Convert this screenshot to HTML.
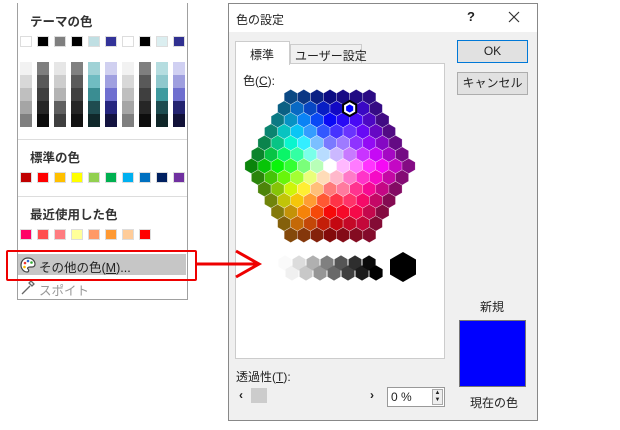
<!DOCTYPE html>
<html><head><meta charset="utf-8"><style>
*{margin:0;padding:0;box-sizing:border-box}
body{width:620px;height:430px;background:#fff;position:relative;overflow:hidden;font-family:"Liberation Sans","Noto Sans CJK JP",sans-serif;font-size:12px;color:#222}
.a{position:absolute}
.sw{position:absolute;width:12px;height:11px;border:1px solid #ddd}
.lbl{font-weight:bold;font-size:12.5px;color:#333}
</style></head><body>
<!-- left menu -->
<div class="a" style="left:17px;top:3px;width:171px;height:297px;border:1px solid #a0a0a0;border-top:none;background:#fff"></div>
<div class="a lbl" style="left:30px;top:11px">テーマの色</div>
<div id="theme"></div>
<div class="a" style="left:18px;top:139px;width:169px;height:1px;background:#ddd"></div>
<div class="a lbl" style="left:30px;top:147px">標準の色</div>
<div class="a" style="left:18px;top:196px;width:169px;height:1px;background:#ddd"></div>
<div class="a lbl" style="left:30px;top:204px">最近使用した色</div>
<div class="a" style="left:18px;top:254px;width:168px;height:21px;background:#c6c6c6"></div>
<svg class="a" style="left:19px;top:256px" width="18" height="18" viewBox="0 0 18 18"><path d="M9 2C4 2 2 6 2 9c0 4 3 7 6 7 2 0 2-2 1-3s0-2 2-2h2c2 0 3-1 3-3 0-3-3-6-7-6z" fill="#fff" stroke="#444" stroke-width="1.2"/><circle cx="6" cy="7" r="1.3" fill="#e33"/><circle cx="9" cy="5" r="1.3" fill="#36c"/><circle cx="12.5" cy="6.5" r="1.3" fill="#3a3"/><circle cx="5.5" cy="11" r="1.3" fill="#fb0"/></svg>
<div class="a" style="left:39px;top:257px;font-size:12.5px;color:#222">その他の色(<u>M</u>)...</div>
<svg class="a" style="left:20px;top:279px" width="16" height="16"><path d="M2 15l8-8M9 4l3 3M11 2l3 3-2 2-3-3z" stroke="#666" stroke-width="1.3" fill="none"/></svg>
<div class="a" style="left:39px;top:280px;color:#999;font-size:12.5px">スポイト</div>
<!-- dialog -->
<div class="a" style="left:228px;top:3px;width:310px;height:418px;background:#f0f0f0;border:1px solid #888"></div>
<div class="a" style="left:229px;top:4px;width:308px;height:28px;background:#fff"></div>
<div class="a" style="left:236px;top:11px;font-size:12px">色の設定</div>
<div class="a" style="left:467px;top:9px;font-size:13px;font-weight:bold">?</div>
<svg class="a" style="left:508px;top:11px" width="12" height="12"><path d="M1 1L11 11M11 1L1 11" stroke="#333" stroke-width="1.2"/></svg>
<div class="a" style="left:235px;top:63px;width:210px;height:296px;background:#fff;border:1px solid #ccc"></div>
<div class="a" style="left:235px;top:41px;width:55px;height:24px;background:#fff;border:1px solid #ccc;border-bottom:none;font-size:12px;padding:4px 0 0 14px">標準</div>
<div class="a" style="left:290px;top:44px;width:72px;height:19px;background:#f0f0f0;border:1px solid #ccc;border-bottom:none;font-size:12px;padding:2px 0 0 4px;white-space:nowrap">ユーザー設定</div>
<div class="a" style="left:243px;top:72px;font-size:12px">色(<u>C</u>):</div>
<svg id="hex" class="a" style="left:235px;top:85px" width="200" height="200"></svg>
<div class="a" style="left:457px;top:40px;width:71px;height:23px;background:#e1e1e1;border:1px solid #0078d7;text-align:center;line-height:21px;font-size:12px">OK</div>
<div class="a" style="left:457px;top:72px;width:71px;height:23px;background:#e1e1e1;border:1px solid #adadad;text-align:center;line-height:21px;font-size:12px">キャンセル</div>
<div class="a" style="left:480px;top:298px;font-size:12px">新規</div>
<div class="a" style="left:459px;top:320px;width:67px;height:67px;background:#00f;border:1px solid #777"></div>
<div class="a" style="left:470px;top:394px;font-size:12px">現在の色</div>
<div class="a" style="left:236px;top:368px;font-size:12px">透過性(<u>T</u>):</div>
<div class="a" style="left:236px;top:387px;width:146px;height:18px;background:#f0f0f0"></div>
<div class="a" style="left:239px;top:388px;font-size:12px;font-weight:bold">‹</div>
<div class="a" style="left:251px;top:388px;width:16px;height:15px;background:#ccc"></div>
<div class="a" style="left:370px;top:388px;font-size:12px;font-weight:bold">›</div>
<div class="a" style="left:387px;top:387px;width:58px;height:20px;background:#fff;border:1px solid #999;font-size:12px;padding:2px 0 0 3px">0 %</div>
<div class="a" style="left:432px;top:389px;width:11px;height:16px;border:1px solid #aaa;background:#eee;font-size:6px;line-height:7px;text-align:center">▲<br>▼</div>
<!-- red annotations on top -->
<div class="a" style="left:6px;top:250px;width:191px;height:31px;border:2px solid #e00;border-radius:2px;z-index:5"></div>
<svg class="a" style="left:196px;top:248px;z-index:5" width="70" height="34"><path d="M0 16H62M40 3L63 16 40 29" stroke="#e00" stroke-width="3" fill="none"/></svg>
<script>
var th=['#fff','#000','#7f7f7f','#000','#c0dfe3','#333399','#fff','#000','#dbeef0','#303090'];
var sh=[['#f2f2f2','#d8d8d8','#bfbfbf','#a5a5a5','#7f7f7f'],['#7f7f7f','#595959','#3f3f3f','#262626','#0d0d0d'],['#e6e6e6','#cdcdcd','#b3b3b3','#5f5f5f','#3f3f3f'],['#808080','#5a5a5a','#404040','#262626','#121212'],['#a0d2d6','#70bcc2','#3a8d92','#1f4c50','#10282a'],['#d0d0f0','#a0a0e0','#6f6fd0','#262680','#131340'],['#f2f2f2','#d8d8d8','#bfbfbf','#a5a5a5','#7f7f7f'],['#7f7f7f','#595959','#3f3f3f','#262626','#0d0d0d'],['#b5dde0','#8fc8cd','#3f9a9f','#1d4c50','#0f2628'],['#d0d0f2','#9f9fdf','#6f6fcf','#232370','#111138']];
var st=['#c00000','#ff0000','#ffc000','#ffff00','#92d050','#00b050','#00b0f0','#0070c0','#002060','#7030a0'];
var rc=['#ff0066','#ff5050','#ff7c80','#ffff99','#ff9966','#ff9933','#ffcc99','#ff0000'];
var h='';
for(var i=0;i<10;i++){var x=20+i*17;h+='<div class="sw" style="left:'+x+'px;top:36px;background:'+th[i]+'"></div>';
for(var j=0;j<5;j++)h+='<div class="a" style="left:'+x+'px;top:'+(62+j*13)+'px;width:12px;height:13px;background:'+sh[i][j]+'"></div>';
h+='<div class="sw" style="left:'+x+'px;top:172px;background:'+st[i]+'"></div>';}
for(var i=0;i<8;i++)h+='<div class="sw" style="left:'+(20+i*17)+'px;top:229px;background:'+rc[i]+'"></div>';
document.getElementById('theme').innerHTML=h;
function hsl(H,S,L){return 'hsl('+H+','+S+'%,'+L+'%)';}
var W=13.1,R=11.5,cx=95,cy=81,s='';
function hex(x,y,w,c,extra){var a=w/2,b=w/Math.sqrt(3);return '<polygon points="'+[[x,y-b],[x+a,y-b/2],[x+a,y+b/2],[x,y+b],[x-a,y+b/2],[x-a,y-b/2]].map(function(p){return p[0].toFixed(1)+','+p[1].toFixed(1)}).join(' ')+'" fill="'+c+'" '+(extra||'')+'/>';}
var Ls=[100,86,74,60,50,40,28];
for(var r=0;r<13;r++){var n=13-Math.abs(r-6);var y=12+r*R;
for(var k=0;k<n;k++){var col=k-(n-1)/2;var x=cx+col*W;
var q=Math.abs(r-6),dc=Math.abs(2*col);var ring=q+Math.max(0,(dc-q)/2);
var ang=Math.atan2((y-cy)/R,(x-cx)/W*0.87)*180/Math.PI;
var a=(ang+90+360)%360;var H=a<180?240+a*2/3:(a-180)*4/3;H=H%360;
var c=ring==0?'#fff':hsl(H.toFixed(0),ring<=3?100:(ring==6?85:92),Ls[ring]);
s+=hex(x,y,W,c,'stroke="#fff" stroke-width="0.3"');}}
s+=hex(cx+1.5*W,12+R,W+2,'#000')+hex(cx+1.5*W,12+R,W-2,'#fff')+hex(cx+1.5*W,12+R,W-6,'#00f');
var g=['#fafafa','#f0f0f0','#dcdcdc','#c8c8c8','#b0b0b0','#969696','#808080','#696969','#555','#404040','#2e2e2e','#1c1c1c','#0a0a0a','#000'];
for(var i=0;i<14;i++){var row=i%2;s+=hex(50+i*7,row?188:178,W,g[i]);}
s+=hex(168,182,26,'#000');
document.getElementById('hex').innerHTML=s;
</script>
</body></html>
